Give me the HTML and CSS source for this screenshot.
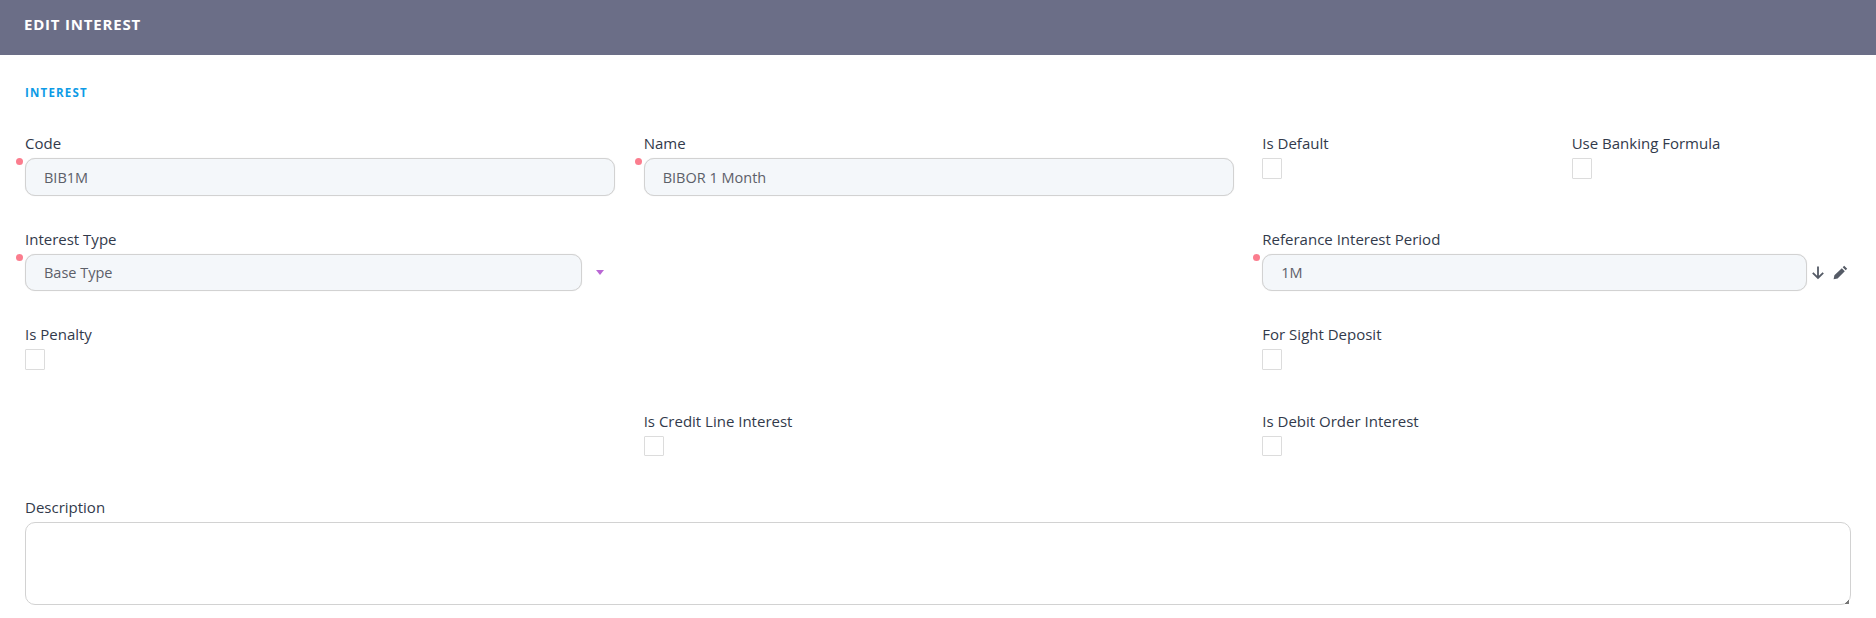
FILE: index.html
```html
<!DOCTYPE html>
<html lang="en">
<head>
<meta charset="utf-8">
<title>Edit Interest</title>
<link rel="stylesheet" href="styles.css">
</head>
<body>
<header class="page-header"><h1 class="page-title">EDIT INTEREST</h1></header>
<main class="form">
  <h2 class="section-title">INTEREST</h2>
  <div class="row row-tight">
    <div class="col span-2">
      <label class="label">Code</label>
      <div class="field required h38"><span>BIB1M</span></div>
    </div>
    <div class="col span-2">
      <label class="label">Name</label>
      <div class="field required h38"><span>BIBOR 1 Month</span></div>
    </div>
    <div class="col">
      <label class="label">Is Default</label>
      <input class="check" type="checkbox">
    </div>
    <div class="col">
      <label class="label">Use Banking Formula</label>
      <input class="check" type="checkbox">
    </div>
  </div>
  <div class="row row-tight">
    <div class="col span-2">
      <label class="label">Interest Type</label>
      <div class="with-addon">
        <div class="field required grow"><span>Base Type</span></div>
        <div class="addon addon-select">
          <svg class="caret" width="8" height="5" viewBox="0 0 8 5"><path d="M0 0h8L4 5z" fill="#b967d4"/></svg>
        </div>
      </div>
    </div>
    <div class="col span-2"></div>
    <div class="col span-2">
      <label class="label">Referance Interest Period</label>
      <div class="with-addon">
        <div class="field required grow"><span>1M</span></div>
        <div class="addon addon-lookup">
          <svg width="14" height="15" viewBox="0 0 14 15"><path d="M7 1.500v11.500M1.800 7.800 7 13l5.200-5.200" fill="none" stroke="#555b66" stroke-width="1.800"/></svg>
          <svg width="15" height="15" viewBox="0 0 15 15"><path d="M11.200.8l3 3-1.500 1.500-3-3zM8.800 3.200l3 3-7.200 7.200-4 .8.800-4z" fill="#555b66"/></svg>
        </div>
      </div>
    </div>
  </div>
  <div class="row row-wide">
    <div class="col span-2">
      <label class="label">Is Penalty</label>
      <input class="check" type="checkbox">
    </div>
    <div class="col span-2"></div>
    <div class="col span-2">
      <label class="label">For Sight Deposit</label>
      <input class="check" type="checkbox">
    </div>
  </div>
  <div class="row row-wide">
    <div class="col span-2"></div>
    <div class="col span-2">
      <label class="label">Is Credit Line Interest</label>
      <input class="check check-short" type="checkbox">
    </div>
    <div class="col span-2">
      <label class="label">Is Debit Order Interest</label>
      <input class="check check-short" type="checkbox">
    </div>
  </div>
  <div class="row">
    <div class="col span-6 col-full">
      <label class="label">Description</label>
      <div class="area-wrap"><textarea class="area"></textarea></div>
    </div>
  </div>
</main>
</body>
</html>
```
FILE: styles.css
```css
* { box-sizing: border-box; }
html, body { margin: 0; height: 100%; background: #fff; }
body {
  font-family: "Open Sans", "Liberation Sans", sans-serif;
  font-size: 15px;
  color: #323a4b;
  overflow: hidden;
}
.page-header {
  height: 55px;
  background: #6b6e87;
  display: flex;
  align-items: center;
  padding: 0 0 0 24px;
}
.page-title {
  margin: 0 0 7px;
  font-size: 15px;
  line-height: 20px;
  font-weight: 700;
  letter-spacing: 0.8px;
  color: #fff;
}
.form { padding: 30px 10px 0; }
.section-title {
  margin: 0 0 33px 15px;
  font-size: 11.500px;
  line-height: 16px;
  font-weight: 700;
  letter-spacing: 1.200px;
  color: #0d9be6;
}
.row {
  display: grid;
  grid-template-columns: repeat(6, 1fr);
}
.row-tight { margin-bottom: 34px; }
.row-wide { margin-bottom: 42px; }
.col { padding: 0 13.500px 0 15px; min-width: 0; }
.span-2 { grid-column: span 2; }
.span-6 { grid-column: span 6; }
.col-full { padding-right: 15px; }
.label {
  display: block;
  height: 24px;
  line-height: 18px;
  font-size: 15px;
  color: #323a4b;
}
.field {
  position: relative;
  height: 37px;
  padding: 0 18px;
  display: flex;
  align-items: center;
  background: #f4f7fa;
  border: 1px solid #d2d2d2;
  border-radius: 10px;
  box-shadow: 0 0 1px rgba(0, 0, 0, 0.15);
  color: #5c6069;
  font-size: 14.500px;
}
.h38 { height: 38px; }
.required::before {
  content: "";
  position: absolute;
  left: -10px;
  top: -1px;
  width: 7px;
  height: 7px;
  border-radius: 50%;
  background: #fb7d8e;
}
.with-addon { display: flex; align-items: center; }
.grow { flex: 1 1 auto; min-width: 0; }
.addon { flex: none; display: flex; align-items: center; height: 37px; }
.addon-select { width: 33px; padding-left: 14px; }
.addon-lookup { width: 45.500px; gap: 8px; padding-left: 4px; }
.check {
  appearance: none;
  display: block;
  margin: 0;
  width: 20px;
  height: 21px;
  background: #fff;
  border: 1px solid #dcdcdc;
  border-radius: 1px;
}
.check-short { height: 20px; }
.area-wrap { position: relative; }
.area-wrap::after {
  content: "";
  position: absolute;
  right: 2px;
  bottom: 1px;
  width: 4px;
  height: 4px;
  background: linear-gradient(135deg, transparent 50%, #777 50%);
}
.area {
  display: block;
  width: 100%;
  height: 83px;
  margin: 0;
  padding: 8px 17px;
  background: #fff;
  border: 1px solid #d2d2d2;
  border-radius: 10px;
  resize: none;
  font: inherit;
  outline: none;
}
```
